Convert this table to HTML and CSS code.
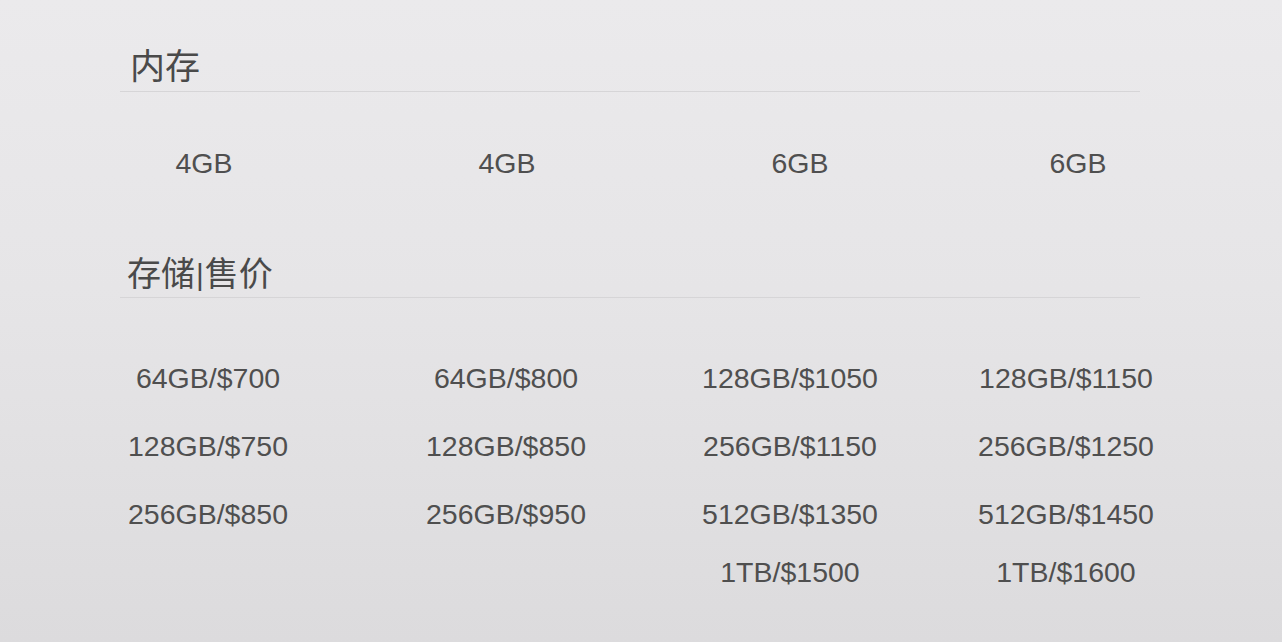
FILE: index.html
```html
<!DOCTYPE html>
<html lang="zh">
<head>
<meta charset="utf-8">
<title>内存 / 存储 售价</title>
<link rel="stylesheet" href="styles.css">
</head>
<body>
<main class="page">
  <section class="block block-mem">
    <h2 class="heading h-mem">内存</h2>
  </section>
  <div class="mem-row">
    <div class="cell">4GB</div>
    <div class="cell">4GB</div>
    <div class="cell">6GB</div>
    <div class="cell">6GB</div>
  </div>
  <section class="block block-price">
    <h2 class="heading h-price">存储<span class="bar">|</span>售价</h2>
  </section>
  <div class="price-grid">
    <div class="col">
      <div class="price">64GB/$700</div>
      <div class="price">128GB/$750</div>
      <div class="price">256GB/$850</div>
    </div>
    <div class="col">
      <div class="price">64GB/$800</div>
      <div class="price">128GB/$850</div>
      <div class="price">256GB/$950</div>
    </div>
    <div class="col">
      <div class="price">128GB/$1050</div>
      <div class="price">256GB/$1150</div>
      <div class="price">512GB/$1350</div>
      <div class="price last">1TB/$1500</div>
    </div>
    <div class="col">
      <div class="price">128GB/$1150</div>
      <div class="price">256GB/$1250</div>
      <div class="price">512GB/$1450</div>
      <div class="price last">1TB/$1600</div>
    </div>
  </div>
</main>
</body>
</html>
```

FILE: styles.css
```css
html, body {
  margin: 0;
  padding: 0;
}
body {
  width: 1282px;
  height: 642px;
  overflow: hidden;
  background: linear-gradient(180deg, #ebeaec 0%, #e6e5e7 45%, #dcdbdd 100%);
  font-family: "Liberation Sans", Arial, "Noto Sans CJK SC", sans-serif;
  color: #4f4f4f;
}
.page {
  display: flex;
  flex-direction: column;
}
.block {
  margin-left: 120px;
  width: 1020px;
  border-bottom: 1px solid #d6d5d7;
}
.heading {
  margin: 0;
  font-family: "Noto Sans CJK SC", "Liberation Sans", sans-serif;
  font-weight: 400;
  font-size: 35px;
  line-height: 40px;
  height: 40px;
  color: #4a4a4a;
}
.block-mem {
  margin-top: 44px;
  padding-bottom: 7px;
}
.h-mem {
  padding-left: 10px;
}
.block-price {
  margin-top: 69px;
  padding-bottom: 5px;
}
.h-price {
  padding-left: 7px;
  font-size: 34px;
}
.bar {
  display: inline-block;
  font-family: "Liberation Sans", sans-serif;
  font-weight: 400;
  font-size: 30px;
  line-height: 30px;
  margin: 0 1px;
  vertical-align: 1px;
}
.mem-row {
  margin-top: 51px;
  margin-left: 59px;
  display: grid;
  grid-template-columns: 290px 316px 270px 286px;
}
.cell, .price {
  text-align: center;
  font-size: 28.5px;
  line-height: 40px;
  white-space: nowrap;
}
.price-grid {
  margin-top: 60px;
  margin-left: 59px;
  display: grid;
  grid-template-columns: 298px 298px 270px 282px;
}
.col {
  display: flex;
  flex-direction: column;
  gap: 28px;
}
.price.last {
  margin-top: -10px;
}
```
